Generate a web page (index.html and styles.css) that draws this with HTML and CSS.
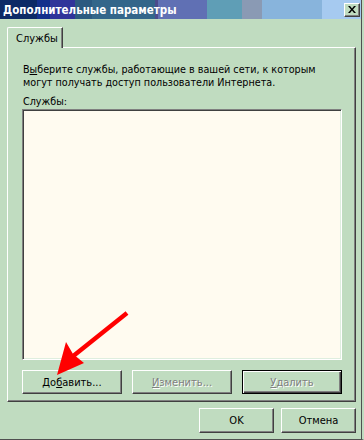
FILE: index.html
```html
<!DOCTYPE html>
<html>
<head>
    <title>Дополнительные параметры</title>
    <link rel="stylesheet" href="styles.css">
</head>
<body>
    <div class="window">
        <div class="titlebar">
            <span class="title">Дополнительные параметры</span>
            <button class="close-btn" type="button">
                <svg width="8" height="7" viewBox="0 0 8 7">
                    <path d="M0 0h2l2 2.5L6 0h2L5 3.5 8 7H6L4 4.5 2 7H0l3-3.5z" fill="#000"/>
                </svg>
            </button>
        </div>

        <div class="client">
            <div class="tabs">
                <div class="tab">Службы</div>
            </div>

            <div class="panel">
                <p class="desc">В<u>ы</u>берите службы, работающие в вашей сети, к которым<br>могут получать доступ пользователи Интернета.</p>
                <div class="label">Службы:</div>
                <div class="listbox"></div>
                <div class="btn-row">
                    <button class="btn" type="button">До<u>б</u>авить...</button>
                    <button class="btn disabled" type="button"><u>И</u>зменить...</button>
                    <button class="btn disabled default" type="button"><u>У</u>далить</button>
                </div>
            </div>

            <div class="footer">
                <button class="btn dlg" type="button">OK</button>
                <button class="btn dlg" type="button">Отмена</button>
            </div>
        </div>

        <!-- red pointer drawn over the dialog -->
        <svg class="arrow" width="364" height="440" viewBox="0 0 364 440">
            <line x1="127" y1="313" x2="72" y2="357" stroke="#ff0000" stroke-width="4.5"/>
            <polygon points="57,375 66,342 73,354 84,363" fill="#ff0000"/>
        </svg>
    </div>
</body>
</html>
```

FILE: styles.css
```css
body {
    margin: 0;
    background-color: #c0dcc0;
    font-family: "DejaVu Sans Condensed", "DejaVu Sans", sans-serif;
    font-stretch: condensed;
    font-size: 10.7px;
    color: #000;
}

.window {
    position: relative;
    width: 364px;
    height: 440px;
    box-sizing: border-box;
    border-right: 2px solid #c0dcc0;
    border-bottom: 1px solid #505050;
    box-shadow: inset -1px 0 #505050;
}

.titlebar {
    height: 19px;
    display: flex;
    align-items: center;
    justify-content: space-between;
    padding: 0 1px 0 3px;
    margin-right: 1px;
    background: linear-gradient(to right,
        #0c2a66 0, #0c2a66 37px,
        #12308c 37px, #12308c 50px,
        #30349a 50px, #30349a 75px,
        #2c5a80 75px, #2c5a80 92px,
        #33668a 92px, #33668a 155px,
        #4c4c8c 155px, #4c4c8c 158px,
        #6070b4 158px, #6070b4 207px,
        #5f9eb6 207px, #5f9eb6 242px,
        #8a9ab4 242px, #8a9ab4 262px,
        #88b4dc 262px, #88b4dc 322px,
        #a6caf0 322px);
}

.title {
    color: #fff;
    font-weight: bold;
    font-size: 11.5px;
    white-space: nowrap;
}

.close-btn {
    width: 16px;
    height: 14px;
    padding: 0;
    margin: 0;
    display: flex;
    align-items: center;
    justify-content: center;
    background-color: #c0dcc0;
    border: 1px solid;
    border-color: #fff #404040 #404040 #fff;
    box-shadow: inset -1px -1px #808080;
}

.client {
    padding: 8px 0 0 7px;
}

.tabs {
    display: flex;
    position: relative;
    z-index: 1;
    margin-bottom: -1px;
}

.tab {
    width: 56px;
    height: 21px;
    box-sizing: border-box;
    padding: 4px 0 0 8px;
    background-color: #c0dcc0;
    border-left: 1px solid #fff;
    border-top: 1px solid #fff;
    border-right: 1px solid #404040;
    border-top-left-radius: 2px;
    box-shadow: inset -1px 0 #808080;
    font-size: 11px;
}

.panel {
    width: 349px;
    height: 355px;
    box-sizing: border-box;
    padding: 15px 0 0 14px;
    border: 1px solid;
    border-color: #fff #404040 #404040 #fff;
    box-shadow: inset -1px -1px #808080;
}

.desc {
    margin: 0 0 0 1px;
    line-height: 13px;
}

.label {
    margin: 6px 0 0 1px;
    line-height: 13px;
}

.listbox {
    width: 320px;
    height: 251px;
    box-sizing: border-box;
    margin-top: 1px;
    background-color: #fffbf0;
    border: 1px solid;
    border-color: #808080 #fff #fff #808080;
    box-shadow: inset 1px 1px #404040, inset -1px -1px #dfeedf;
}

.btn-row {
    width: 320px;
    display: flex;
    justify-content: space-between;
    margin-top: 10px;
}

.btn {
    width: 100px;
    height: 24px;
    padding: 0;
    margin: 0;
    background-color: #c0dcc0;
    font-family: "DejaVu Sans Condensed", "DejaVu Sans", sans-serif;
    font-stretch: condensed;
    font-size: 11px;
    color: #000;
    border: 1px solid;
    border-color: #fff #404040 #404040 #fff;
    box-shadow: inset -1px -1px #808080;
}

.btn.disabled {
    color: #808080;
    text-shadow: 1px 1px #fff;
}

.btn.default {
    border: 1px solid #000;
    box-shadow: inset 1px 1px #fff, inset -1px -1px #404040, inset -2px -2px #808080;
}

.footer {
    display: flex;
    justify-content: flex-end;
    gap: 7px;
    width: 349px;
    margin-top: 6px;
}

.btn.dlg {
    width: 75px;
    height: 25px;
}

.arrow {
    position: absolute;
    left: 0;
    top: 0;
    pointer-events: none;
}
```
